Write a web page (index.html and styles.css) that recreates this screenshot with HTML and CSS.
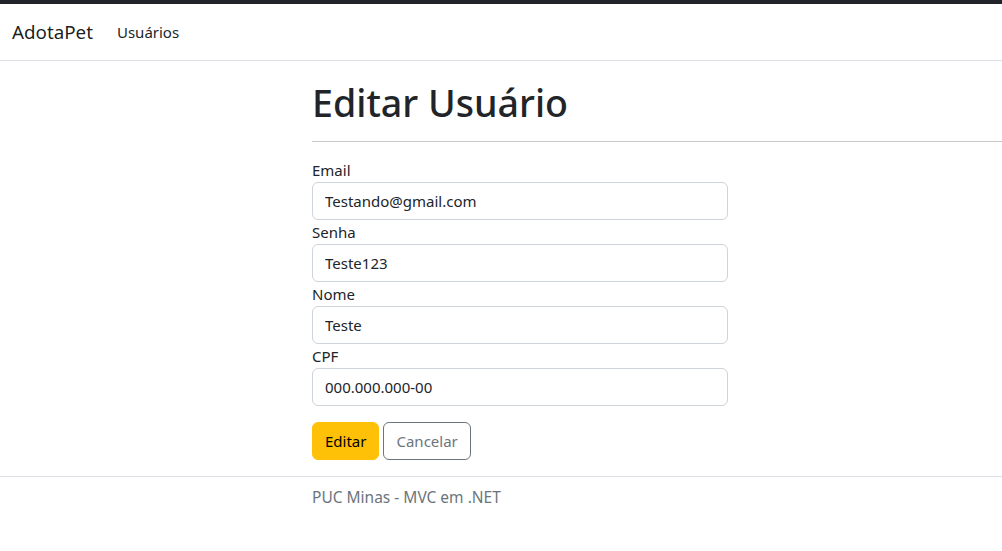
FILE: index.html
```html
<!DOCTYPE html>
<html lang="pt-br">
<head>
<meta charset="utf-8">
<title>Editar Usuário - AdotaPet</title>
<link rel="stylesheet" href="styles.css">
</head>
<body>
<header class="navbar">
  <a class="brand" href="#">AdotaPet</a>
  <a class="nav-link" href="#">Usuários</a>
</header>
<main class="main">
  <h1 class="title">Editar Usuário</h1>
  <hr class="rule">
  <form class="form">
    <div class="group">
      <label class="label" for="email">Email</label>
      <input class="control" id="email" type="text" value="Testando@gmail.com">
    </div>
    <div class="group">
      <label class="label" for="senha">Senha</label>
      <input class="control" id="senha" type="text" value="Teste123">
    </div>
    <div class="group">
      <label class="label" for="nome">Nome</label>
      <input class="control" id="nome" type="text" value="Teste">
    </div>
    <div class="group">
      <label class="label" for="cpf">CPF</label>
      <input class="control" id="cpf" type="text" value="000.000.000-00">
    </div>
    <div class="actions">
      <button class="btn btn-warning" type="button">Editar</button>
      <a class="btn btn-outline" href="#">Cancelar</a>
    </div>
  </form>
</main>
<footer class="footer">
  <span class="footer-text">PUC Minas - MVC em .NET</span>
</footer>
</body>
</html>
```

FILE: styles.css
```css
* { box-sizing: border-box; }
html, body { margin: 0; padding: 0; }
body {
  font-family: "Noto Sans", "Open Sans", sans-serif;
  font-size: 15px;
  line-height: 24px;
  color: #212529;
  background: #fff;
  border-top: 4px solid #212529;
}
.navbar {
  display: flex;
  align-items: center;
  height: 57px;
  padding: 0 12px;
  border-bottom: 1px solid #dee2e6;
}
.brand {
  font-size: 18.8px;
  line-height: 30px;
  color: rgba(0,0,0,.9);
  text-decoration: none;
  margin-right: 24px;
}
.nav-link {
  font-size: 15px;
  color: #212529;
  text-decoration: none;
}
.main {
  padding-left: 312px;
}
.title {
  font-size: 37.6px;
  font-weight: 500;
  line-height: 48px;
  margin: 18px 0 0;
}
.rule {
  margin: 14px 0 16px;
  border: 0;
  border-top: 1px solid #c8c8c8;
}
.form { width: 416px; }
.group { margin: 0; }
.label { display: block; }
.control {
  display: block;
  width: 100%;
  height: 38px;
  padding: 6px 12px;
  font: inherit;
  color: #212529;
  border: 1px solid #ced4da;
  border-radius: 6px;
  background: #fff;
}
.actions {
  display: flex;
  gap: 4px;
  margin-top: 16px;
  padding-bottom: 16px;
}
.btn {
  display: inline-block;
  height: 38px;
  padding: 6px 12px;
  font: inherit;
  line-height: 24px;
  border: 1px solid transparent;
  border-radius: 6px;
  text-decoration: none;
}
.btn-warning {
  background: #ffc107;
  border-color: #ffc107;
  color: #000;
}
.btn-outline {
  background: #fff;
  border-color: #6c757d;
  color: #6c757d;
}
.footer {
  border-top: 1px solid #dee2e6;
  padding: 8px 0 0 312px;
  color: #6c757d;
  font-size: 15.5px;
}
```
